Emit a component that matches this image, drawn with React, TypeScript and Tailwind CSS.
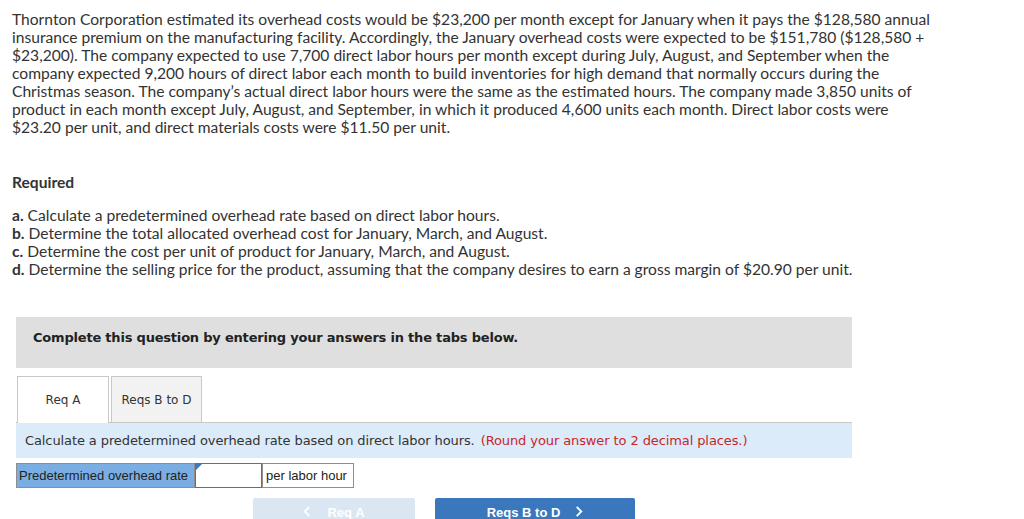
function Chevron({ dir }: { dir: 'left' | 'right' }) {
  return (
    <svg viewBox="0 0 8 12" className="h-[11px] w-[8px]" fill="none" stroke="currentColor" strokeWidth="2" aria-hidden>
      <path d={dir === 'left' ? 'M6.5 1 1.5 6l5 5' : 'M1.5 1l5 5-5 5'} />
    </svg>
  )
}

export default function App() {
  const body = "font-['Lato',sans-serif] text-[15.6px] leading-[18px] text-[#333]"
  return (
    <div className="min-h-[519px] w-[1024px] overflow-hidden bg-white">
      <div className="pl-[12px] pt-[10px]">
        <p className={body}>
          Thornton Corporation estimated its overhead costs would be $23,200 per month except for January when it pays the $128,580 annual
          <br />
          insurance premium on the manufacturing facility. Accordingly, the January overhead costs were expected to be $151,780 ($128,580 +
          <br />
          $23,200). The company expected to use 7,700 direct labor hours per month except during July, August, and September when the
          <br />
          company expected 9,200 hours of direct labor each month to build inventories for high demand that normally occurs during the
          <br />
          Christmas season. The company’s actual direct labor hours were the same as the estimated hours. The company made 3,850 units of
          <br />
          product in each month except July, August, and September, in which it produced 4,600 units each month. Direct labor costs were
          <br />
          $23.20 per unit, and direct materials costs were $11.50 per unit.
        </p>

        <p className={`${body} mt-[37px] font-bold`}>Required</p>

        <div className={`${body} mt-[15px]`}>
          <p><b>a.</b> Calculate a predetermined overhead rate based on direct labor hours.</p>
          <p><b>b.</b> Determine the total allocated overhead cost for January, March, and August.</p>
          <p><b>c.</b> Determine the cost per unit of product for January, March, and August.</p>
          <p><b>d.</b> Determine the selling price for the product, assuming that the company desires to earn a gross margin of $20.90 per unit.</p>
        </div>
      </div>

      <div className="ml-[16px] mt-[39px] w-[836px] font-['DejaVu_Sans',Verdana,sans-serif]">
        <div className="h-[51px] bg-[#dfdfdf] pl-[17px] pt-[8px]">
          <span className="text-[13px] font-bold tracking-[-0.2px] text-[#222]">
            Complete this question by entering your answers in the tabs below.
          </span>
        </div>

        <div className="mt-[8px] flex items-end border-b border-[#c8c8c8] pl-[1px]">
          <div className="-mb-px flex h-[47px] w-[92px] items-center justify-center border border-b-0 border-[#c8c8c8] bg-white text-[12px] text-[#333]">
            Req A
          </div>
          <div className="ml-[2px] flex h-[46px] w-[91px] items-center justify-center border border-b-0 border-[#c8c8c8] bg-[#f2f2f2] text-[12px] text-[#333]">
            Reqs B to D
          </div>
        </div>

        <div className="flex h-[35px] items-center bg-[#dbebf9] pl-[9px] text-[13px] tracking-[-0.1px] text-[#333]">
          Calculate a predetermined overhead rate based on direct labor hours.
          <span className="ml-[6px] text-[#c8262b]">(Round your answer to 2 decimal places.)</span>
        </div>

        <div className="mt-[5px] flex h-[25px] font-['Liberation_Sans',Arial,sans-serif] text-[13px]">
          <div className="flex w-[179px] items-center border border-[#8e8e8e] bg-[#7aaee3] pl-[2px] text-[#222]">
            Predetermined overhead rate
          </div>
          <div className="relative w-[67px] border border-[#3b78c0] bg-white">
            <span className="absolute left-0 top-0 h-0 w-0 border-l-[6px] border-b-[6px] border-l-[#3b78c0] border-b-transparent" />
          </div>
          <div className="flex w-[92px] items-center border border-[#8e8e8e] bg-white pl-[3px] text-[#222]">
            per labor hour
          </div>
        </div>

        <div className="mt-[10px] flex font-['Liberation_Sans',Arial,sans-serif] text-[13px] font-bold text-white">
          <div className="ml-[237px] flex h-[30px] w-[162px] items-start justify-center rounded-t-[2px] bg-[#dae6f2] pt-[5px]">
            <span className="mr-[16px] mt-[3px]"><Chevron dir="left" /></span>Req A
          </div>
          <div className="ml-[20px] flex h-[30px] w-[200px] items-start justify-center rounded-t-[2px] bg-[#3a77bc] pt-[5px]">
            Reqs B to D<span className="ml-[15px] mt-[3px]"><Chevron dir="right" /></span>
          </div>
        </div>
      </div>
    </div>
  )
}
